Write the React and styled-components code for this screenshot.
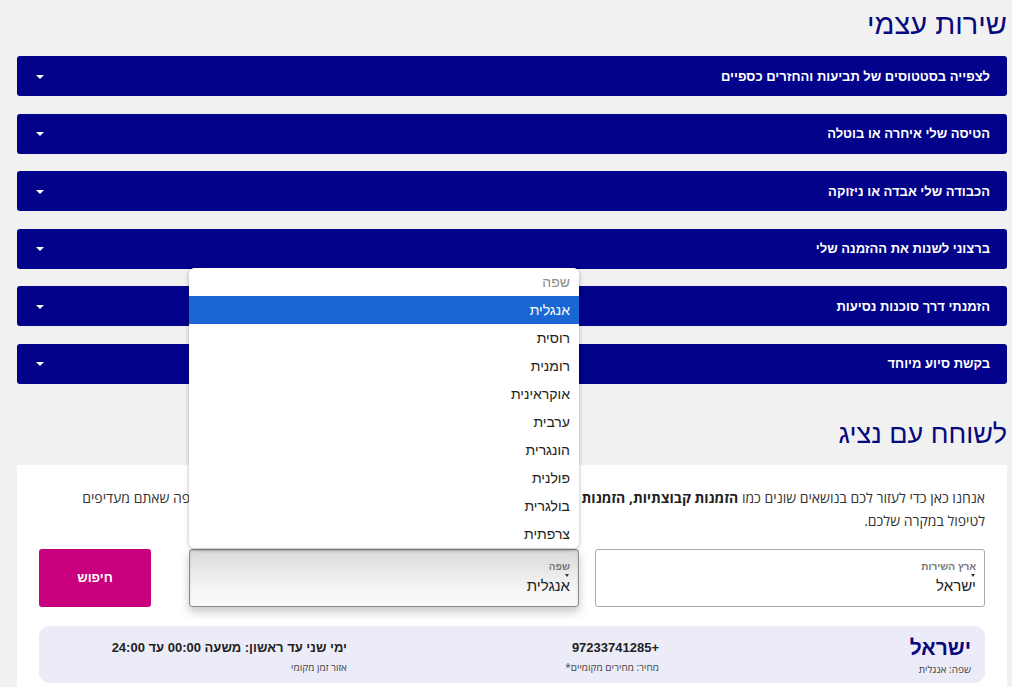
import React from 'react'
import styled, { createGlobalStyle } from 'styled-components'

const GlobalStyle = createGlobalStyle`
  body {
    margin: 0;
    background: #f1f1f1;
    direction: rtl;
    font-family: "Open Sans", "Liberation Sans", "DejaVu Sans", sans-serif;
    color: #222;
  }
`

const Page = styled.div`
  padding: 0 5px 0 17px;
  height: 687px;
  overflow: hidden;
`

const Heading = styled.h2`
  margin: ${p => p.$top}px 0 ${p => p.$bottom}px 0;
  font-size: ${p => p.$size}px;
  line-height: 34px;
  font-weight: 400;
  color: #08087e;
  font-family: "Liberation Sans", "DejaVu Sans", sans-serif;
`

const AccordionList = styled.div`
  display: flex;
  flex-direction: column;
  gap: 17.6px;
`

const AccordionBar = styled.div`
  height: 40px;
  background: #02028a;
  border-radius: 3px;
  display: flex;
  align-items: center;
  justify-content: space-between;
  padding: 0 17px 0 19px;
  color: #fff;
  font-family: "Liberation Sans", sans-serif;
  font-weight: 700;
  font-size: 13px;
`

const Caret = styled.span`
  width: 0;
  height: 0;
  border-left: 4px solid transparent;
  border-right: 4px solid transparent;
  border-top: 4px solid #fff;
  margin-top: 1px;
`

const Card = styled.div`
  background: #fff;
  padding: 21px 22px 20px 22px;
`

const Intro = styled.p`
  margin: 0 0 17px;
  font-size: 14px;
  line-height: 23px;
  color: #333;
  b { color: #222; }
`

const IntroLine = styled.span`
  white-space: nowrap;
`

const FormRow = styled.div`
  display: flex;
  height: 58px;
  gap: 16px;
`

const FieldWrap = styled.div`
  position: relative;
  width: 390px;
  margin-left: ${p => p.$gapLeft || 0}px;
`

const Field = styled.div`
  box-sizing: border-box;
  height: 58px;
  border-radius: 3px;
  padding: 11px 8px 0;
  border: 1px solid ${p => (p.$open ? '#8a8a8a' : '#a9a9a9')};
  background: ${p => (p.$open ? 'linear-gradient(to bottom, #d9d9d9, #f6f6f6 70%, #fafafa)' : '#fff')};
  box-shadow: ${p => (p.$open ? '0 5px 10px rgba(0,0,0,0.22), inset 0 1px 2px rgba(0,0,0,0.15)' : 'none')};
  display: flex;
  flex-direction: column;
  align-items: flex-start;
`

const FieldLabel = styled.span`
  font-size: 10px;
  font-weight: 700;
  color: #7a7a7a;
  line-height: 12px;
  font-family: "Liberation Sans", sans-serif;
`

const TinyCaret = styled.span`
  width: 0;
  height: 0;
  border-left: 2px solid transparent;
  border-right: 2px solid transparent;
  border-top: 3px solid #333;
  margin: 1px 1px 0;
`

const FieldValue = styled.span`
  font-size: 15px;
  line-height: 18px;
  color: #222;
  font-family: "Liberation Sans", sans-serif;
`

const SearchButton = styled.button`
  width: 112px;
  height: 58px;
  border: none;
  border-radius: 3px;
  background: #c8007e;
  color: #fff;
  font-weight: 700;
  font-size: 13px;
  font-family: "Liberation Sans", sans-serif;
`

const Dropdown = styled.ul`
  position: absolute;
  top: -281px;
  left: 0;
  width: 390px;
  margin: 0;
  padding: 0;
  list-style: none;
  background: #fff;
  border-radius: 6px;
  box-shadow: 0 1px 4px rgba(0,0,0,0.3);
  overflow: hidden;
  z-index: 5;
`

const Option = styled.li`
  height: 28px;
  line-height: 28px;
  padding: 0 9px;
  font-size: 14px;
  font-family: "Liberation Sans", sans-serif;
  background: ${p => (p.$active ? '#1a67d3' : '#fff')};
  color: ${p => (p.$active ? '#fff' : p.$muted ? '#8c8c8c' : '#222')};
`

const Result = styled.div`
  margin-top: 19px;
  background: #ececf8;
  border-radius: 10px;
  height: 57px;
  box-sizing: border-box;
  padding: 10px 14px 0;
  display: grid;
  grid-template-columns: 312px 312px 1fr;
`

const ResultCol = styled.div`
  display: flex;
  flex-direction: column;
  gap: 3px;
`

const ResultTitle = styled.span`
  font-size: ${p => (p.$big ? 21 : 13)}px;
  line-height: ${p => (p.$big ? 24 : 20)}px;
  margin-top: ${p => (p.$big ? 0 : 2)}px;
  font-weight: 700;
  color: ${p => (p.$big ? '#08087e' : '#222')};
  font-family: "Liberation Sans", sans-serif;
`

const ResultNote = styled.span`
  font-size: 10px;
  line-height: 12px;
  color: #444;
`

const topics = [
  'לצפייה בסטטוסים של תביעות והחזרים כספיים',
  'הטיסה שלי איחרה או בוטלה',
  'הכבודה שלי אבדה או ניזוקה',
  'ברצוני לשנות את ההזמנה שלי',
  'הזמנתי דרך סוכנות נסיעות',
  'בקשת סיוע מיוחד',
]

const languages = ['אנגלית', 'רוסית', 'רומנית', 'אוקראינית', 'ערבית', 'הונגרית', 'פולנית', 'בולגרית', 'צרפתית']

export default function App() {
  return (
    <Page>
      <GlobalStyle />
      <Heading $size={29} $top={7} $bottom={15}>שירות עצמי</Heading>
      <AccordionList>
        {topics.map(t => (
          <AccordionBar key={t}>
            <span>{t}</span>
            <Caret />
          </AccordionBar>
        ))}
      </AccordionList>
      <Heading $size={27} $top={33} $bottom={14}>לשוחח עם נציג</Heading>
      <Card>
        <Intro>
          <IntroLine>
            אנחנו כאן כדי לעזור לכם בנושאים שונים כמו <b>הזמנות קבוצתיות, הזמנות מיוחדות</b> ושינויים בהזמנה ועוד. אנא בחרו כאן את ארץ השירות ואת השפה שאתם מעדיפים
          </IntroLine>
          <br />
          לטיפול במקרה שלכם.
        </Intro>
        <FormRow>
          <FieldWrap>
            <Field>
              <FieldLabel>ארץ השירות</FieldLabel>
              <TinyCaret />
              <FieldValue>ישראל</FieldValue>
            </Field>
          </FieldWrap>
          <FieldWrap $gapLeft={22}>
            <Field $open>
              <FieldLabel>שפה</FieldLabel>
              <TinyCaret />
              <FieldValue>אנגלית</FieldValue>
            </Field>
            <Dropdown>
              <Option $muted>שפה</Option>
              {languages.map((l, i) => (
                <Option key={l} $active={i === 0}>{l}</Option>
              ))}
            </Dropdown>
          </FieldWrap>
          <SearchButton>חיפוש</SearchButton>
        </FormRow>
        <Result>
          <ResultCol>
            <ResultTitle $big>ישראל</ResultTitle>
            <ResultNote>שפה: אנגלית</ResultNote>
          </ResultCol>
          <ResultCol>
            <ResultTitle>+97233741285</ResultTitle>
            <ResultNote>מחיר: מחירים מקומיים*</ResultNote>
          </ResultCol>
          <ResultCol>
            <ResultTitle>ימי שני עד ראשון: משעה 00:00 עד 24:00</ResultTitle>
            <ResultNote>אזור זמן מקומי</ResultNote>
          </ResultCol>
        </Result>
      </Card>
    </Page>
  )
}
